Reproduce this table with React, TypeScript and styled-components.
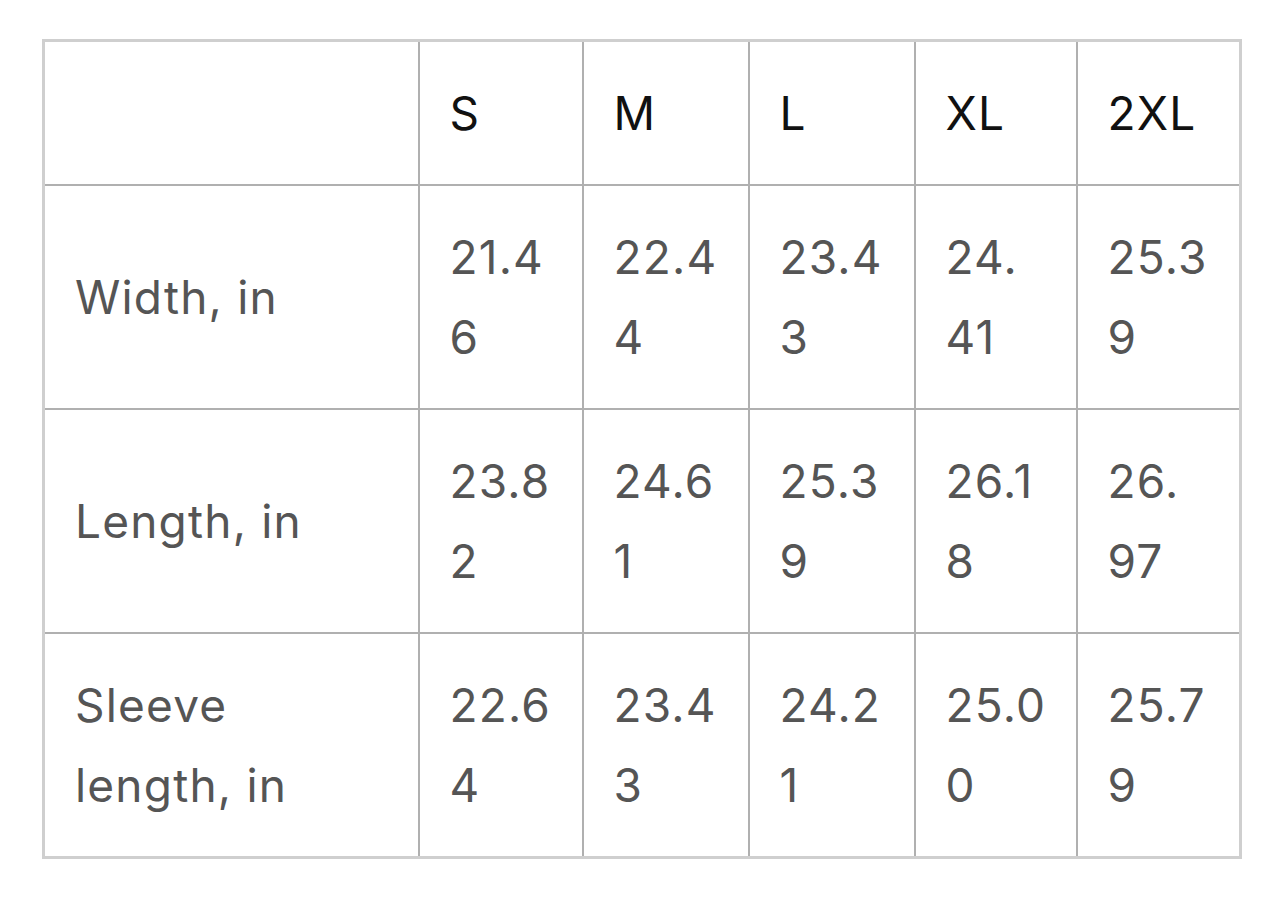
import React from "react";
import styled, { createGlobalStyle } from "styled-components";

const Global = createGlobalStyle`
  html, body { margin: 0; padding: 0; background: #ffffff; }
  body { font-family: Inter, "Noto Sans", "Liberation Sans", sans-serif; }
`;

const Page = styled.div`
  padding: 39px 0 0 42px;
`;

const Table = styled.table`
  border-collapse: collapse;
  table-layout: fixed;
  width: 1197px;
  border: 3px solid #cfcfcf;
  font-size: 46px;
  line-height: 80px;
  letter-spacing: 1.2px;
`;

const Col = styled.col<{ $w: number }>`
  width: ${(p) => p.$w}px;
`;

const Head = styled.th`
  border: 2px solid #b0b0b0;
  padding: 31px 30px;
  text-align: left;
  font-weight: 400;
  color: #111111;
  vertical-align: middle;
`;

const Label = styled.td`
  border: 2px solid #b0b0b0;
  padding: 31px 30px;
  color: #555555;
  vertical-align: middle;
`;

const Cell = styled.td`
  border: 2px solid #b0b0b0;
  padding: 31px 30px;
  color: #555555;
  vertical-align: middle;
`;

const sizes = ["S", "M", "L", "XL", "2XL"];
const widths = [375, 164, 166, 166, 162, 164];

const rows: { label: string[]; values: string[][] }[] = [
  {
    label: ["Width, in"],
    values: [["21.4", "6"], ["22.4", "4"], ["23.4", "3"], ["24.", "41"], ["25.3", "9"]],
  },
  {
    label: ["Length, in"],
    values: [["23.8", "2"], ["24.6", "1"], ["25.3", "9"], ["26.1", "8"], ["26.", "97"]],
  },
  {
    label: ["Sleeve", "length, in"],
    values: [["22.6", "4"], ["23.4", "3"], ["24.2", "1"], ["25.0", "0"], ["25.7", "9"]],
  },
];

const Lines = ({ parts }: { parts: string[] }) => (
  <>
    {parts.map((p, i) => (
      <React.Fragment key={i}>
        {i > 0 && <br />}
        {p}
      </React.Fragment>
    ))}
  </>
);

export default function App() {
  return (
    <>
      <Global />
      <Page>
        <Table>
          <colgroup>
            {widths.map((w, i) => (
              <Col key={i} $w={w} />
            ))}
          </colgroup>
          <thead>
            <tr>
              <Head />
              {sizes.map((s) => (
                <Head key={s}>{s}</Head>
              ))}
            </tr>
          </thead>
          <tbody>
            {rows.map((r) => (
              <tr key={r.label.join(" ")}>
                <Label>
                  <Lines parts={r.label} />
                </Label>
                {r.values.map((v, i) => (
                  <Cell key={i}>
                    <Lines parts={v} />
                  </Cell>
                ))}
              </tr>
            ))}
          </tbody>
        </Table>
      </Page>
    </>
  );
}
